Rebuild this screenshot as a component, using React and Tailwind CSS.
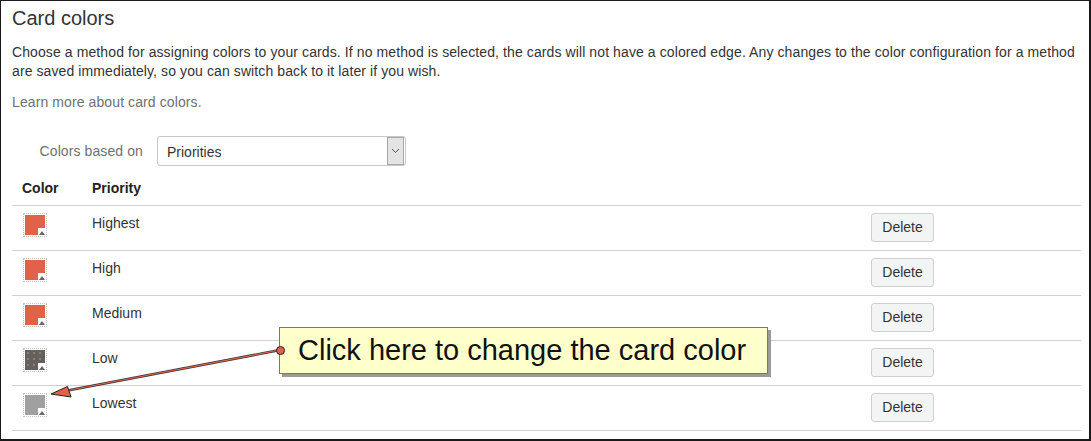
import React from "react";

const rows = [
  { name: "Highest", color: "bg-[#e2614b]" },
  { name: "High", color: "bg-[#e2614b]" },
  { name: "Medium", color: "bg-[#e2614b]" },
  { name: "Low", color: "bg-[#66605c]", dots: true },
  { name: "Lowest", color: "bg-[#a0a0a0]" },
];

function Swatch({ color, dots }) {
  return (
    <div className="relative w-[24px] h-[24px] border border-dotted border-[#c4c4c4] p-px">
      <div
        className={`w-full h-full ${color} ${
          dots ? "bg-[radial-gradient(circle,#9a9490_0.6px,transparent_0.9px)] bg-[length:6px_6px]" : ""
        }`}
      />
      <div className="absolute right-0 bottom-0 w-[8px] h-[8px] bg-white flex items-end justify-center">
        <div className="w-0 h-0 border-l-[3px] border-r-[3px] border-b-[4px] border-l-transparent border-r-transparent border-b-[#666] mb-px" />
      </div>
    </div>
  );
}

export default function App() {
  return (
    <div
      className="relative w-[1091px] h-[441px] bg-white border-t border-l border-r-2 border-b-2 border-[#1a1a1a] pl-[11px] pr-[8px] text-[#333]"
      style={{ fontFamily: '"Liberation Sans", Arial, sans-serif' }}
    >
      <h1 className="text-[20px] leading-[24px] pt-[5px] text-[#333]">Card colors</h1>

      <p className="mt-[13px] text-[14px] leading-[19px] w-[1068px] tracking-[0.1px]">
        Choose a method for assigning colors to your cards. If no method is selected, the cards will not have a colored edge. Any changes to the color configuration for a method are saved immediately, so you can switch back to it later if you wish.
      </p>

      <p className="mt-[11px] text-[14px] leading-[20px] text-[#707070] tracking-[0.1px]">Learn more about card colors.</p>

      <div className="mt-[24px] flex items-center">
        <div className="w-[131px] text-right text-[14px] text-[#707070] tracking-[0.1px]">Colors based on</div>
        <div className="ml-[14px] w-[249px] h-[30px] border border-[#c8c8c8] rounded-[3px] flex items-center justify-between pl-[9px] pr-px text-[14px] text-[#333]">
          <span className="pt-[2px]">Priorities</span>
          <div className="w-[17px] h-[28px] border border-[#a8a8a8] bg-[#e4e4e4] flex items-center justify-center">
            <svg width="9" height="6" viewBox="0 0 9 6">
              <path d="M1 1 L4.5 4.5 L8 1" fill="none" stroke="#555" strokeWidth="1" />
            </svg>
          </div>
        </div>
      </div>

      <div className="mt-[5px] w-[1069px]">
        <div className="flex h-[35px] border-b border-[#d0d0d0] pt-[7px] text-[14px] font-bold text-[#222]">
          <div className="w-[70px] pl-[10px] leading-[20px]">Color</div>
          <div className="pl-[10px] leading-[20px]">Priority</div>
        </div>
        {rows.map((r) => (
          <div key={r.name} className="flex h-[45px] border-b border-[#d0d0d0]">
            <div className="w-[70px] pl-[11px] pt-[7px]">
              <Swatch color={r.color} dots={r.dots} />
            </div>
            <div className="w-[779px] pl-[10px] pt-[7px] text-[14px] leading-[20px] text-[#333]">{r.name}</div>
            <div className="pl-[10px] pt-[7px]">
              <button className="w-[63px] h-[29px] bg-[#f3f4f4] border border-[#cfcfcf] rounded-[3px] text-[14px] text-[#333]">
                Delete
              </button>
            </div>
          </div>
        ))}
      </div>

      <svg className="absolute left-0 top-0 pointer-events-none" width="1091" height="441">
        <line x1="279" y1="349" x2="64" y2="390" stroke="#333" strokeWidth="2.6" />
        <line x1="279" y1="349" x2="64" y2="390" stroke="#e2614b" strokeWidth="1.2" />
        <polygon points="50,393 66.5,385.5 70,396" fill="#e2614b" stroke="#222" strokeWidth="1" />
      </svg>

      <div className="absolute left-[278px] top-[326px] w-[489px] h-[47px] bg-[#ffffcc] border border-[#777] shadow-[3px_3px_0_#9a9a9a] flex items-center pl-[18px] text-[29px] text-[#111]">
        Click here to change the card color
      </div>
      <div className="absolute left-[275px] top-[345px] w-[9px] h-[9px] rounded-full bg-[#e2614b] border border-[#222]" />
    </div>
  );
}
